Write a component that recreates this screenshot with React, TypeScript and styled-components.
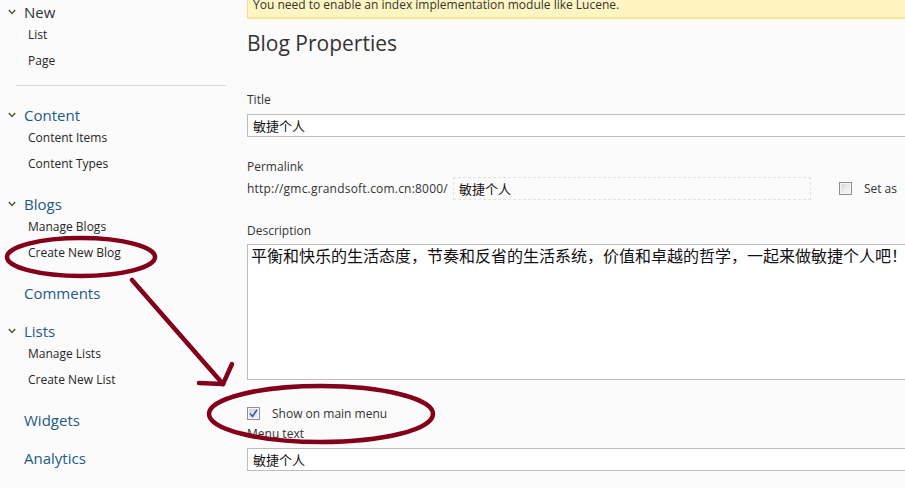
import React from "react";
import styled, { createGlobalStyle } from "styled-components";

const Global = createGlobalStyle`
  html, body { margin: 0; padding: 0; background: #fbfbfb; }
  body {
    font-family: "Open Sans", "Noto Sans CJK SC", sans-serif;
    color: #333;
    overflow: hidden;
  }
`;

const Page = styled.div`
  position: relative;
  width: 905px;
  height: 488px;
  overflow: hidden;
  display: flex;
  background: #fbfbfb;
`;

const Sidebar = styled.nav`
  width: 247px;
  flex: none;
  padding-top: 2px;
  box-sizing: border-box;
`;

const Section = styled.div<{ $tail: number }>`
  padding-bottom: ${(p) => p.$tail}px;
`;

const Heading = styled.div<{ $blue?: boolean; $chevron?: boolean }>`
  display: flex;
  align-items: center;
  height: 20px;
  padding-left: ${(p) => (p.$chevron ? 8 : 24)}px;
  font-size: 15px;
  line-height: 20px;
  color: ${(p) => (p.$blue ? "#1d5a86" : "#333")};
`;

const ChevronIcon = styled.svg`
  width: 8px;
  height: 6px;
  margin-right: 8px;
  flex: none;
`;

const Item = styled.div`
  padding-left: 28px;
  font-size: 12px;
  line-height: 26px;
  height: 26px;
  color: #262626;
`;

const Separator = styled.hr`
  border: 0;
  height: 1px;
  background: #d9d9d9;
  margin: 11px 21px 19px 16px;
`;

const Main = styled.main`
  flex: 1;
  min-width: 0;
  overflow: hidden;
`;

const Notice = styled.div`
  margin-top: -5px;
  padding: 0 5px 2px;
  line-height: 20px;
  font-size: 12px;
  background: #fff5c2;
  border-left: 1px solid #f3de8c;
  border-bottom: 2px solid #f8e596;
  white-space: nowrap;
  color: #333;
`;

const Title = styled.h1`
  margin: 9px 0 0;
  font-size: 21px;
  font-weight: 400;
  line-height: 30px;
  color: #333;
`;

const Label = styled.div<{ $gap: number }>`
  margin-top: ${(p) => p.$gap}px;
  font-size: 12px;
  line-height: 18px;
  height: 18px;
  color: #333;
`;

const TextInput = styled.input`
  display: block;
  box-sizing: border-box;
  margin-top: 5px;
  width: 700px;
  height: 23px;
  padding: 0 5px;
  border: 1px solid #bdbdbd;
  background: #fff;
  font-family: "Noto Sans CJK SC", sans-serif;
  font-size: 13px;
  color: #111;
  outline: none;
`;

const PermaRow = styled.div`
  margin-top: 1px;
  display: flex;
  align-items: center;
  height: 23px;
  font-size: 12px;
  white-space: nowrap;
`;

const Prefix = styled.span`
  letter-spacing: 0.2px;
`;

const SlugInput = styled.input`
  box-sizing: border-box;
  margin-left: 5px;
  width: 358px;
  height: 23px;
  padding: 0 5px;
  border: 1px dashed #e3e3d8;
  background: transparent;
  font-family: "Noto Sans CJK SC", sans-serif;
  font-size: 13px;
  color: #111;
  outline: none;
`;

const Check = styled.span<{ $gap: number; $checked?: boolean }>`
  position: relative;
  display: inline-flex;
  align-items: center;
  justify-content: center;
  flex: none;
  box-sizing: border-box;
  width: 13px;
  height: 13px;
  margin-left: ${(p) => p.$gap}px;
  border: 1px solid #8f8f8f;
  box-shadow: inset 0 0 0 1px #f4f4f4;
  background: ${(p) =>
    p.$checked
      ? "linear-gradient(135deg, #c9cfe0 0%, #e4e8f2 60%, #f4f6fa 100%)"
      : "linear-gradient(135deg, #d6d6d6 0%, #eeeeee 60%, #fafafa 100%)"};
`;

const CheckLabel = styled.span<{ $gap: number }>`
  margin-left: ${(p) => p.$gap}px;
  font-size: 12px;
  color: #333;
`;

const Description = styled.textarea`
  display: block;
  box-sizing: border-box;
  margin-top: 4px;
  width: 700px;
  height: 136px;
  padding: 0 3px;
  border: 1px solid #bdbdbd;
  background: #fff;
  font-family: "Noto Sans CJK SC", sans-serif;
  font-size: 16px;
  line-height: 20px;
  color: #111;
  resize: none;
  outline: none;
  overflow: hidden;
`;

const CheckRow = styled.div`
  margin-top: 24px;
  height: 18px;
  display: flex;
  align-items: center;
`;

const Overlay = styled.svg`
  position: absolute;
  left: 0;
  top: 0;
  width: 905px;
  height: 488px;
  pointer-events: none;
`;

const Chevron = () => (
  <ChevronIcon viewBox="0 0 8 6">
    <polyline points="0.8,1 4,4.4 7.2,1" fill="none" stroke="#55552b" strokeWidth="1.5" />
  </ChevronIcon>
);

type Sec = { title: string; blue: boolean; chevron: boolean; items: string[] };

const sections: Sec[] = [
  { title: "Content", blue: true, chevron: true, items: ["Content Items", "Content Types"] },
  { title: "Blogs", blue: true, chevron: true, items: ["Manage Blogs", "Create New Blog"] },
  { title: "Comments", blue: true, chevron: false, items: [] },
  { title: "Lists", blue: true, chevron: true, items: ["Manage Lists", "Create New List"] },
  { title: "Widgets", blue: true, chevron: false, items: [] },
  { title: "Analytics", blue: true, chevron: false, items: [] },
];

export default function App() {
  return (
    <>
      <Global />
      <Page>
        <Sidebar>
          <Section $tail={0}>
            <Heading $chevron>
              <Chevron />
              New
            </Heading>
            <Item>List</Item>
            <Item>Page</Item>
          </Section>
          <Separator />
          {sections.map((s) => (
            <Section key={s.title} $tail={s.items.length ? 17 : 18}>
              <Heading $blue={s.blue} $chevron={s.chevron}>
                {s.chevron && <Chevron />}
                {s.title}
              </Heading>
              {s.items.map((i) => (
                <Item key={i}>{i}</Item>
              ))}
            </Section>
          ))}
        </Sidebar>
        <Main>
          <Notice>You need to enable an index implementation module like Lucene.</Notice>
          <Title>Blog Properties</Title>
          <Label $gap={33}>Title</Label>
          <TextInput readOnly defaultValue="敏捷个人" />
          <Label $gap={21}>Permalink</Label>
          <PermaRow>
            <Prefix>http://gmc.grandsoft.com.cn:8000/</Prefix>
            <SlugInput readOnly defaultValue="敏捷个人" />
            <Check $gap={28} />
            <CheckLabel $gap={12}>Set as</CheckLabel>
          </PermaRow>
          <Label $gap={22}>Description</Label>
          <Description
            readOnly
            defaultValue="平衡和快乐的生活态度，节奏和反省的生活系统，价值和卓越的哲学，一起来做敏捷个人吧！"
          />
          <CheckRow>
            <Check $gap={0} $checked>
              <svg width="9" height="9" viewBox="0 0 9 9">
                <polyline points="1,4.5 3.5,7.5 8,0.8" fill="none" stroke="#3f56a3" strokeWidth="1.6" />
              </svg>
            </Check>
            <CheckLabel $gap={12}>Show on main menu</CheckLabel>
          </CheckRow>
          <Label $gap={3}>Menu text</Label>
          <TextInput readOnly defaultValue="敏捷个人" />
        </Main>
        <Overlay viewBox="0 0 905 488">
          <g fill="none" stroke="#820019" strokeWidth="4.5" strokeLinecap="round" strokeLinejoin="round">
            <ellipse cx="81" cy="257" rx="74" ry="19" />
            <line x1="132" y1="280" x2="223" y2="384" />
            <polyline points="199,383 223,384 232,364" />
            <ellipse cx="321" cy="414" rx="112" ry="28" />
          </g>
        </Overlay>
      </Page>
    </>
  );
}
